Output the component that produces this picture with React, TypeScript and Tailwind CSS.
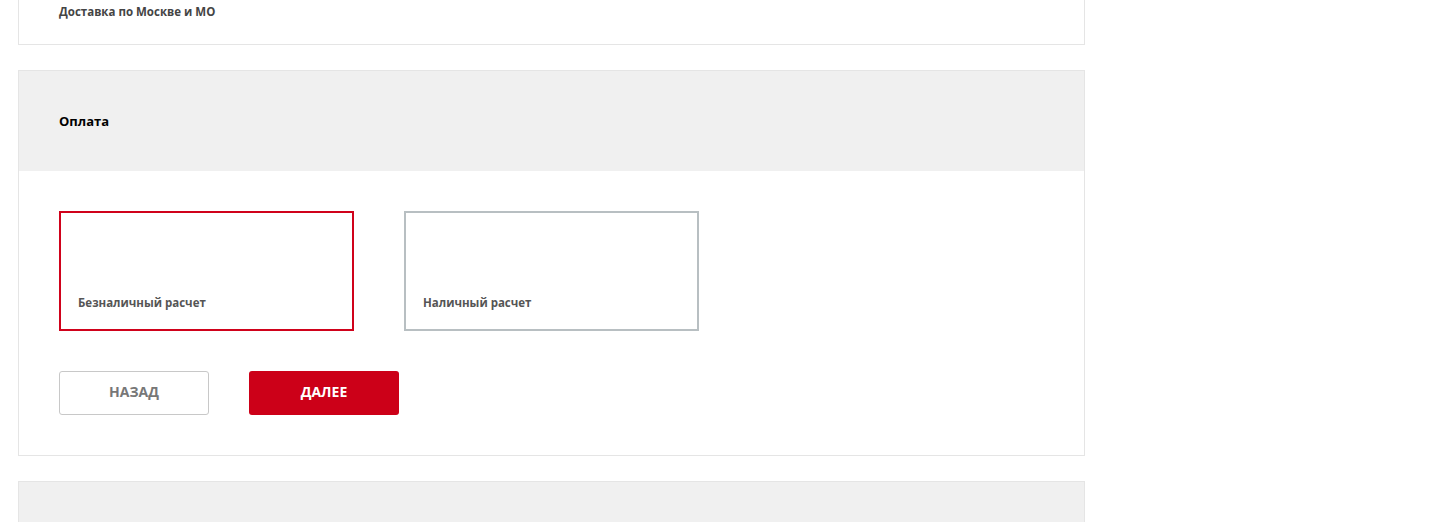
import React from 'react'

const font = { fontFamily: '"Open Sans", "Liberation Sans", sans-serif' }

function PaymentOption({ label, active }: { label: string; active?: boolean }) {
  return (
    <div
      className={`w-[295px] h-[120px] flex items-end px-[17px] pb-[17px] bg-white border-2 ${
        active ? 'border-[#d0021b]' : 'border-[#b8bfc2]'
      }`}
    >
      <span className="text-[11.5px] leading-[18px] font-bold text-[#555]">{label}</span>
    </div>
  )
}

export default function App() {
  return (
    <div className="min-h-screen bg-white pl-[18px]" style={font}>
      <div className="w-[1067px] flex flex-col">
        {/* Delivery (cut off) */}
        <div className="border-x border-b border-[#e5e5e5] pl-[40px] pt-[3px] pb-[23px]">
          <p className="text-[11.5px] leading-[18px] font-bold text-[#444]">Доставка по Москве и МО</p>
        </div>

        {/* Payment */}
        <div className="mt-[25px] border border-[#e5e5e5]">
          <div className="h-[100px] bg-[#f0f0f0] flex items-center px-[40px]">
            <h2 className="text-[13px] leading-[18px] font-bold text-black">Оплата</h2>
          </div>
          <div className="px-[40px] py-[40px]">
            <div className="flex gap-[50px]">
              <PaymentOption label="Безналичный расчет" active />
              <PaymentOption label="Наличный расчет" />
            </div>
            <div className="flex gap-[40px] mt-[40px]">
              <button className="w-[150px] h-[44px] pb-[3px] rounded-[3px] border border-[#c8c8c8] bg-white text-[14px] font-bold text-[#777]">
                НАЗАД
              </button>
              <button className="w-[150px] h-[44px] pb-[3px] rounded-[3px] bg-[#cc0018] text-[14px] font-bold text-white">
                ДАЛЕЕ
              </button>
            </div>
          </div>
        </div>

        {/* Next section */}
        <div className="mt-[25px] h-[60px] border border-[#e5e5e5] bg-[#f0f0f0]" />
      </div>
    </div>
  )
}
